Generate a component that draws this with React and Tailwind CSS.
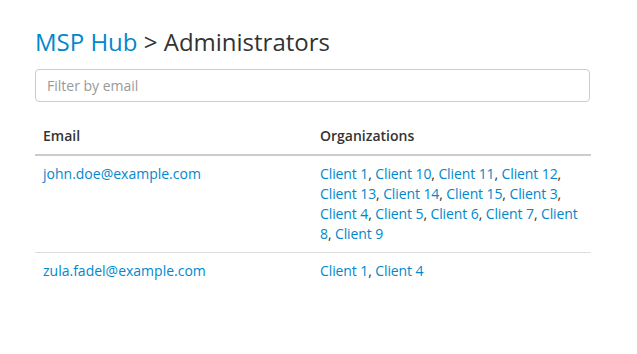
import React, { useState } from 'react';

const admins = [
  {
    email: 'john.doe@example.com',
    orgs: ['Client 1', 'Client 10', 'Client 11', 'Client 12', 'Client 13', 'Client 14', 'Client 15', 'Client 3', 'Client 4', 'Client 5', 'Client 6', 'Client 7', 'Client 8', 'Client 9'],
  },
  {
    email: 'zula.fadel@example.com',
    orgs: ['Client 1', 'Client 4'],
  },
];

const App = () => {
  const [filter, setFilter] = useState('');

  const rows = admins.filter((a) => a.email.includes(filter.trim().toLowerCase()));

  return (
    <div className="min-h-screen bg-white px-[35px] pt-[29px] text-[#333] font-['Open_Sans',sans-serif]">
      {/* Breadcrumb title */}
      <h1 className="text-[24px] leading-[26px] font-normal">
        <a href="#" className="text-[#0088cc]">MSP Hub</a>
        <span> &gt; Administrators</span>
      </h1>

      <input
        type="text"
        value={filter}
        onChange={(e) => setFilter(e.target.value)}
        placeholder="Filter by email"
        className="mt-[14px] block h-[33px] w-[555px] rounded-[4px] border border-[#ccc] px-[11px] text-[14px] text-[#555] placeholder:text-[#999] outline-none"
      />

      <table className="mt-[16px] w-[556px] table-fixed border-collapse text-[14px] leading-[20px]">
        <thead>
          <tr className="border-b-2 border-[#ccc]">
            <th className="w-[277px] p-[8px] text-left font-semibold">Email</th>
            <th className="p-[8px] text-left font-semibold">Organizations</th>
          </tr>
        </thead>
        <tbody>
          {rows.map((row, i) => (
            <tr key={row.email} className={i < rows.length - 1 ? 'border-b border-[#ddd]' : ''}>
              <td className="p-[8px] align-top">
                <a href="#" className="text-[#0088cc]">{row.email}</a>
              </td>
              <td className="p-[8px] align-top tracking-[-0.1px]">
                {row.orgs.map((org, j) => (
                  <React.Fragment key={org}>
                    <a href="#" className="text-[#0088cc]">{org}</a>
                    {j < row.orgs.length - 1 && ', '}
                  </React.Fragment>
                ))}
              </td>
            </tr>
          ))}
        </tbody>
      </table>
    </div>
  );
};

export default App;
